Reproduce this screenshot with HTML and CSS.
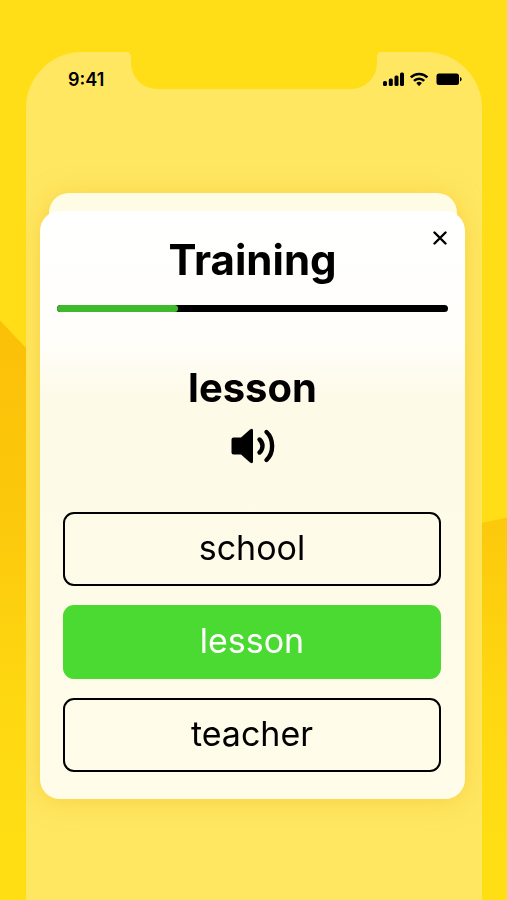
FILE: index.html
```html
<!DOCTYPE html>
<html lang="en">
<head>
    <meta charset="UTF-8">
    <meta name="viewport" content="width=device-width, initial-scale=1.0">
    <title>Training</title>
    <link rel="stylesheet" href="styles.css">
</head>
<body>
    <div class="phone">
        <div class="notch"></div>
        <header class="status-bar">
            <span class="time">9:41</span>
            <svg class="status-icons" width="80" height="16" viewBox="0 0 80 16">
                <rect x="0" y="10" width="4" height="5" rx="1.500"/>
                <rect x="5.800" y="7.500" width="4" height="7.500" rx="1.500"/>
                <rect x="11.500" y="4.500" width="4" height="10.500" rx="1.500"/>
                <rect x="17" y="1.500" width="4" height="13.500" rx="1.500"/>
                <g fill="none" stroke="#000" stroke-width="2.6">
                    <path d="M27.800 6.400a11.800 11.800 0 0 1 16.600 0"/>
                    <path d="M31 9.900a7.200 7.200 0 0 1 10.200 0"/>
                </g>
                <path d="M33.300 12a4.300 4.300 0 0 1 5.600 0L36.800 14.600q-.7.8-1.400 0z"/>
                <rect x="53.500" y="2.500" width="22.500" height="11.500" rx="2.500"/>
                <path d="M77 6c2.200.8 2.200 3.700 0 4.500z"/>
            </svg>
        </header>
        <div class="cards">
            <div class="card-back"></div>
            <main class="card">
                <button class="close" aria-label="Close">
                    <svg width="14" height="14" viewBox="0 0 14 14"><path d="M1.500 1.500l11 11M12.500 1.500l-11 11"/></svg>
                </button>
                <h1 class="title">Training</h1>
                <progress class="progress" value="31" max="100" aria-label="Progress"></progress>
                <h2 class="word">lesson</h2>
                <button class="speaker" aria-label="Listen">
                    <svg width="44" height="36" viewBox="0 0 44 36">
                        <path d="M2.500 9.500h7.500L19 1.500q3-2 3 1v31q0 3-3 1L10 26.500H2.500q-2 0-2-2v-13q0-2 2-2z"/>
                        <g fill="none" stroke="#000" stroke-width="4.400" stroke-linecap="round">
                            <path d="M28.500 11.500c4 3.500 4 9.500 0 13"/>
                            <path d="M35.500 4c7.500 7 7.500 21 0 28"/>
                        </g>
                    </svg>
                </button>
                <div class="answers">
                    <button class="answer">school</button>
                    <button class="answer correct">lesson</button>
                    <button class="answer">teacher</button>
                </div>
            </main>
        </div>
    </div>
</body>
</html>
```

FILE: styles.css
```css
* {
    box-sizing: border-box;
}
body {
    font-family: Inter, "Liberation Sans", sans-serif;
    margin: 0;
    min-height: 100vh;
    display: flex;
    position: relative;
    background: #ffde17;
    color: #000;
}
/* darker wave behind the phone */
body::before {
    content: "";
    position: absolute;
    inset: 0;
    background: linear-gradient(#fbc008 36%, #fcc90c 58%, #fed811 78%, #ffde14 94%);
    clip-path: polygon(0 35.6%, 5.2% 38.7%, 50% 66%, 95% 58.1%, 100% 57.5%, 100% 100%, 0 100%);
}
.phone {
    flex: 1;
    position: relative;
    overflow: hidden;
    margin: 52px 25px 0 26px;
    padding: 0 17px 0 14px;
    border-radius: 56px 56px 0 0;
    background: #ffe761;
}
.notch {
    position: absolute;
    top: 0;
    left: 23%;
    right: 23%;
    height: 37px;
    background: #ffde17;
    border-radius: 0 0 26px 26px;
}
/* small flares where the notch meets the top edge */
.notch::before, .notch::after {
    content: "";
    position: absolute;
    top: 0;
    width: 4px;
    height: 6px;
}
.notch::before {
    left: -4px;
    background: radial-gradient(ellipse at 0 100%, transparent 70%, #ffde17 71%);
}
.notch::after {
    right: -4px;
    background: radial-gradient(ellipse at 100% 100%, transparent 70%, #ffde17 71%);
}
.status-bar {
    display: flex;
    justify-content: space-between;
    align-items: center;
    height: 54px;
    margin-bottom: 87px;
    padding: 0 2px 0 28px;
}
.time {
    font-size: 18px;
    font-weight: 600;
}
.cards {
    filter: drop-shadow(0 2px 12px rgba(240, 190, 40, 0.5));
}
.card-back {
    height: 60px;
    margin: 0 8px 0 9px;
    border-radius: 20px;
    background: #fffce6;
}
.card {
    position: relative;
    display: flex;
    flex-direction: column;
    align-items: center;
    margin-top: -42px;
    padding: 25px 17px 27px;
    border-radius: 20px;
    background: linear-gradient(#fff 0, #fffefa 22%, #fefae8 32%, #fffce9 100%);
}
button {
    font-family: inherit;
    color: inherit;
    border: none;
    padding: 0;
    background: none;
    cursor: pointer;
}
svg {
    display: block;
}
.close {
    position: absolute;
    top: 20px;
    right: 18px;
}
.close path {
    stroke: #000;
    stroke-width: 2.4;
    stroke-linecap: round;
}
.title, .word {
    margin: 0;
    font-size: 40px;
    line-height: 48px;
    font-weight: 700;
}
.title {
    font-size: 42px;
}
.progress {
    appearance: none;
    display: block;
    width: 100%;
    height: 7px;
    margin: 21px 0 52px;
    border: none;
    border-radius: 4px;
    background: none;
}
.progress::-webkit-progress-bar {
    background: #000;
    border-radius: 4px;
    overflow: hidden;
}
.progress::-webkit-progress-value {
    background: #3fba2c;
    border-radius: 4px;
}
.speaker {
    margin: 16px 0 48px;
}
.answers {
    display: flex;
    flex-direction: column;
    gap: 19px;
    width: 100%;
    padding: 0 7px 0 6px;
}
.answer {
    height: 74px;
    padding-bottom: 3px;
    border: 2px solid #000;
    border-radius: 11px;
    font-size: 34px;
    font-weight: 400;
}
.correct {
    border-color: #4bda31;
    background: #4bda31;
    color: #fff;
}
```
